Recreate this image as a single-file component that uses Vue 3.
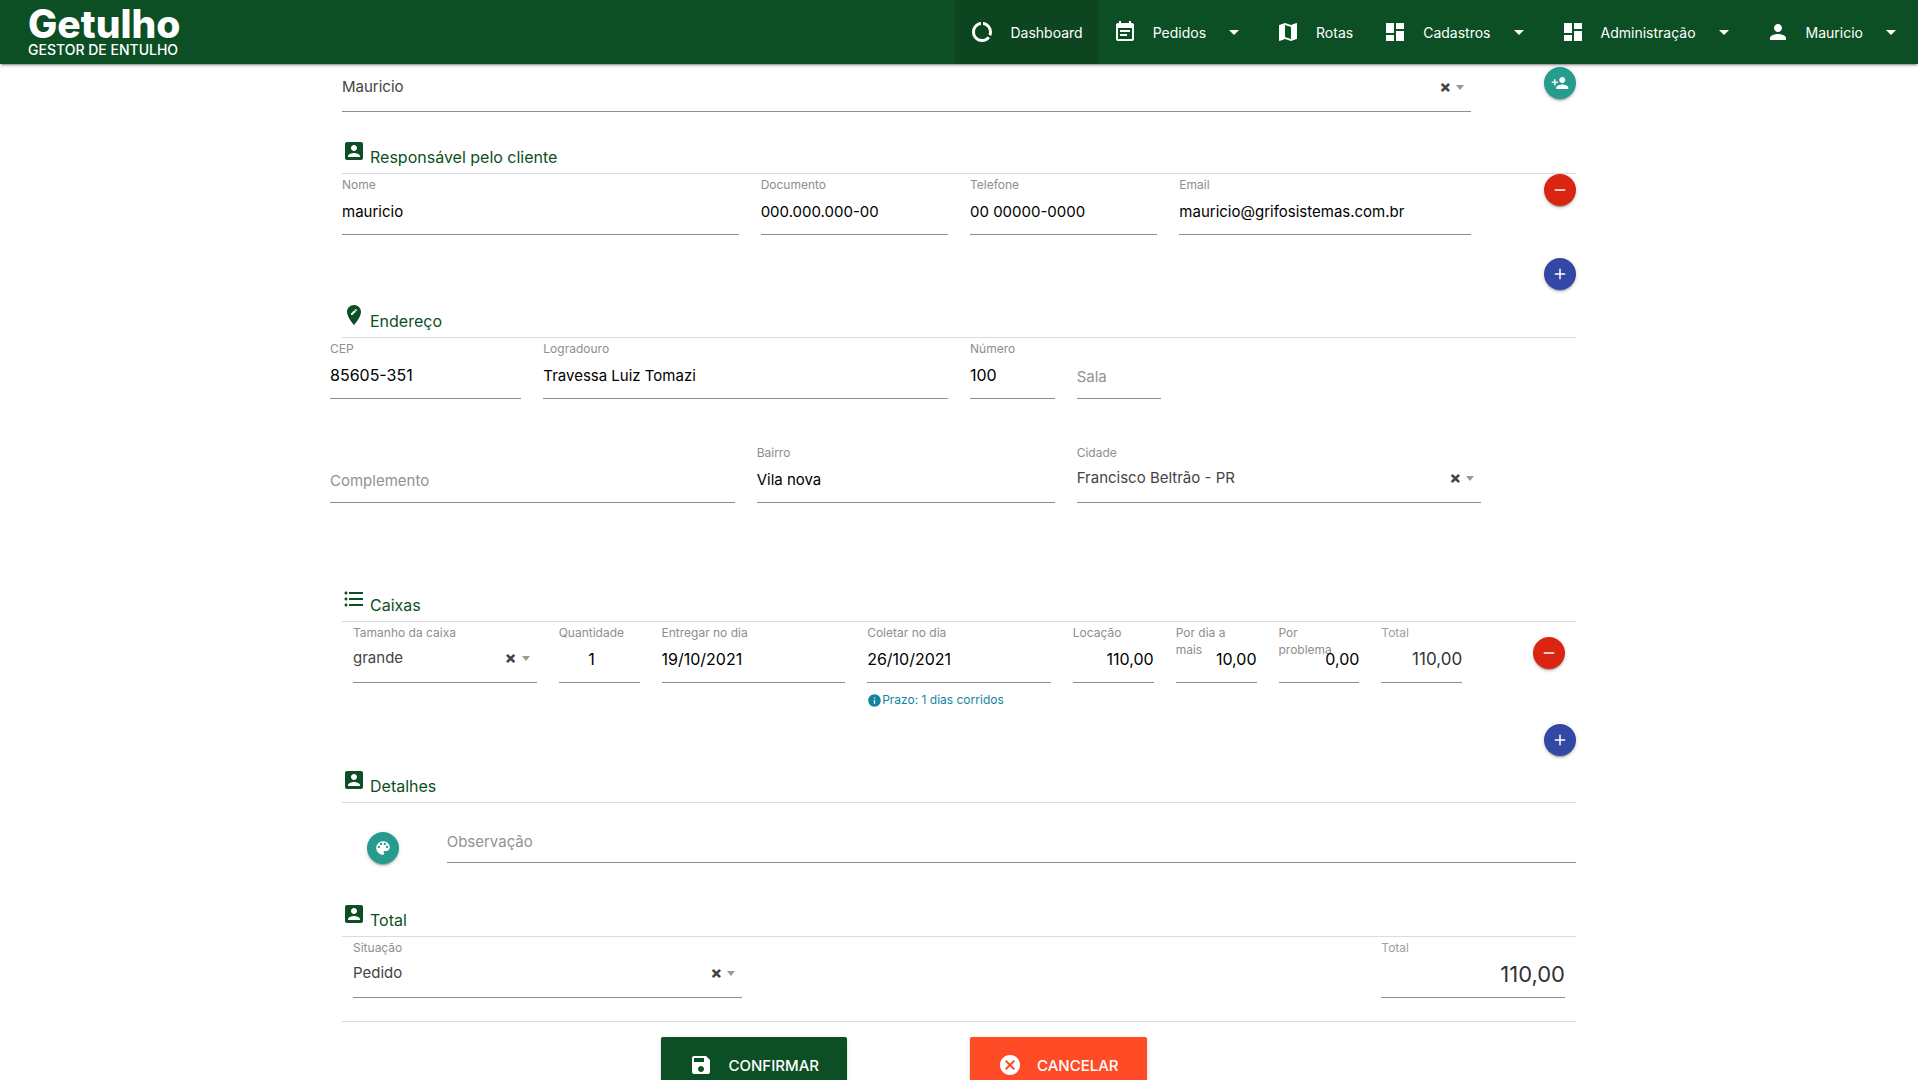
<script setup>
import { reactive, ref } from 'vue'

const icons = {
  usage: 'M13 2.05v3.03c3.39.49 6 3.39 6 6.92 0 .9-.18 1.75-.48 2.54l2.6 1.53c.56-1.24.88-2.62.88-4.07 0-5.18-3.95-9.45-9-9.95zM12 19c-3.87 0-7-3.13-7-7 0-3.53 2.61-6.43 6-6.92V2.05c-5.06.5-9 4.76-9 9.95 0 5.52 4.47 10 9.99 10 3.31 0 6.24-1.61 8.06-4.09l-2.6-1.53C16.17 17.98 14.21 19 12 19z',
  note: 'M17 10H7v2h10v-2zm2-7h-1V1h-2v2H8V1H6v2H5c-1.11 0-1.99.9-1.99 2L3 19c0 1.1.89 2 2 2h14c1.1 0 2-.9 2-2V5c0-1.1-.9-2-2-2zm0 16H5V8h14v11zm-5-5H7v2h7v-2z',
  map: 'M20.5 3l-.16.03L15 5.1 9 3 3.36 4.9c-.21.07-.36.25-.36.48V20.5c0 .28.22.5.5.5l.16-.03L9 18.9l6 2.1 5.64-1.9c.21-.07.36-.25.36-.48V3.5c0-.28-.22-.5-.5-.5zM15 19l-6-2.11V5l6 2.11V19z',
  dashboard: 'M3 13h8V3H3v10zm0 8h8v-6H3v6zm10 0h8V11h-8v10zm0-18v6h8V3h-8z',
  person: 'M12 12c2.21 0 4-1.79 4-4s-1.79-4-4-4-4 1.79-4 4 1.79 4 4 4zm0 2c-2.67 0-8 1.34-8 4v2h16v-2c0-2.66-5.33-4-8-4z',
  caret: 'M7 10l5 5 5-5z',
  personAdd: 'M15 12c2.21 0 4-1.79 4-4s-1.79-4-4-4-4 1.79-4 4 1.79 4 4 4zm-9-2V7H4v3H1v2h3v3h2v-3h3v-2H6zm9 4c-2.67 0-8 1.34-8 4v2h16v-2c0-2.66-5.33-4-8-4z',
  account: 'M3 5v14c0 1.1.89 2 2 2h14c1.1 0 2-.9 2-2V5c0-1.1-.9-2-2-2H5c-1.11 0-2 .9-2 2zm12 4c0 1.66-1.34 3-3 3s-3-1.34-3-3 1.34-3 3-3 3 1.34 3 3zm-9 8c0-2 4-3.1 6-3.1s6 1.1 6 3.1v1H6v-1z',
  place: 'M12 2C8.14 2 5 5.14 5 9c0 5.25 7 13 7 13s7-7.75 7-13c0-3.86-3.14-7-7-7zm-1.56 10H9v-1.44l3.35-3.34 1.43 1.43L10.44 12zm4.45-4.45l-.7.7-1.44-1.44.7-.7c.15-.15.39-.15.54 0l.9.9c.15.15.15.39 0 .54z',
  list: 'M4 10.5c-.83 0-1.5.67-1.5 1.5s.67 1.5 1.5 1.5 1.5-.67 1.5-1.5-.67-1.5-1.5-1.5zm0-6c-.83 0-1.5.67-1.5 1.5S3.17 7.5 4 7.5 5.5 6.83 5.5 6 4.83 4.5 4 4.5zm0 12c-.83 0-1.5.68-1.5 1.5s.68 1.5 1.5 1.5 1.5-.68 1.5-1.5-.67-1.5-1.5-1.5zM7 19h14v-2H7v2zm0-6h14v-2H7v2zm0-8v2h14V5H7z',
  palette: 'M12 3c-4.97 0-9 4.03-9 9s4.03 9 9 9c.83 0 1.5-.67 1.5-1.5 0-.39-.15-.74-.39-1.01-.23-.26-.38-.61-.38-.99 0-.83.67-1.5 1.5-1.5H16c2.76 0 5-2.24 5-5 0-4.42-4.03-8-9-8zm-5.5 9c-.83 0-1.5-.67-1.5-1.5S5.67 9 6.5 9 8 9.67 8 10.5 7.33 12 6.5 12zm3-4C8.67 8 8 7.33 8 6.5S8.67 5 9.5 5s1.5.67 1.5 1.5S10.33 8 9.5 8zm5 0c-.83 0-1.5-.67-1.5-1.5S13.67 5 14.5 5s1.5.67 1.5 1.5S15.33 8 14.5 8zm3 4c-.83 0-1.5-.67-1.5-1.5S16.67 9 17.5 9s1.5.67 1.5 1.5-.67 1.5-1.5 1.5z',
  save: 'M17 3H5c-1.11 0-2 .9-2 2v14c0 1.1.89 2 2 2h14c1.1 0 2-.9 2-2V7l-4-4zm-5 16c-1.66 0-3-1.34-3-3s1.34-3 3-3 3 1.34 3 3-1.34 3-3 3zm3-10H5V5h10v4z',
  cancel: 'M12 2C6.47 2 2 6.47 2 12s4.47 10 10 10 10-4.47 10-10S17.53 2 12 2zm5 13.59L15.59 17 12 13.41 8.41 17 7 15.59 10.59 12 7 8.41 8.41 7 12 10.59 15.59 7 17 8.41 13.41 12 17 15.59z',
  info: 'M12 2C6.48 2 2 6.48 2 12s4.48 10 10 10 10-4.48 10-10S17.52 2 12 2zm1 15h-2v-6h2v6zm0-8h-2V7h2v2z',
  add: 'M19 13h-6v6h-2v-6H5v-2h6V5h2v6h6v2z',
  remove: 'M19 13H5v-2h14v2z',
}

const menu = [
  { text: 'Dashboard', icon: 'usage', active: true },
  { text: 'Pedidos', icon: 'note', drop: true },
  { text: 'Rotas', icon: 'map' },
  { text: 'Cadastros', icon: 'dashboard', drop: true },
  { text: 'Administração', icon: 'dashboard', drop: true },
  { text: 'Mauricio', icon: 'person', drop: true },
]

const cliente = ref('Mauricio')
const responsavel = reactive([
  { id: 'nome', label: 'Nome', value: 'mauricio', span: 's4' },
  { id: 'documento', label: 'Documento', value: '000.000.000-00', span: 's2' },
  { id: 'telefone', label: 'Telefone', value: '00 00000-0000', span: 's2' },
  { id: 'email', label: 'Email', value: 'mauricio@grifosistemas.com.br', span: 's3' },
])
const endereco = reactive([
  { id: 'cep', label: 'CEP', value: '85605-351', span: 's2 digits' },
  { id: 'logradouro', label: 'Logradouro', value: 'Travessa Luiz Tomazi', span: 's4' },
  { id: 'numero', label: 'Número', value: '100', span: 's1 digits' },
])
const sala = ref('')
const complemento = ref('')
const bairro = ref('Vila nova')
const cidade = ref('Francisco Beltrão - PR')
const tamanho = ref('grande')
const quantidade = ref(1)
const entrega = ref('19/10/2021')
const coleta = ref('26/10/2021')
const valores = reactive([
  { id: 'locacao', label: 'Locação', value: '110,00' },
  { id: 'dia-a-mais', label: 'Por dia a mais', value: '10,00' },
  { id: 'problema', label: 'Por problema', value: '0,00' },
])
const observacao = ref('')
const situacao = ref('Pedido')
</script>

<template>
  <div class="app">
    <header class="topbar">
      <a href="#" class="brand">
        <span class="brand-name">Getulho</span>
        <span class="brand-tag">GESTOR DE ENTULHO</span>
      </a>
      <nav class="menu">
        <a v-for="m in menu" :key="m.text" href="#" class="menu-item" :class="{ active: m.active }">
          <svg class="icon" viewBox="0 0 24 24"><path :d="icons[m.icon]" /></svg>
          <span>{{ m.text }}</span>
          <svg v-if="m.drop" class="icon" viewBox="0 0 24 24"><path :d="icons.caret" /></svg>
        </a>
      </nav>
    </header>

    <main class="content">
      <form class="form" @submit.prevent>
        <div class="row inset client">
          <div class="select s11">
            <select v-model="cliente" aria-label="Cliente"><option>Mauricio</option></select>
            <button type="button" class="clear" aria-label="Limpar cliente">×</button>
            <span class="arrow"></span>
          </div>
          <button type="button" class="round teal" aria-label="Adicionar cliente">
            <svg viewBox="0 0 24 24"><path :d="icons.personAdd" /></svg>
          </button>
        </div>

        <h2 class="title after-client">
          <svg class="icon" viewBox="0 0 24 24"><path :d="icons.account" /></svg>
          <span>Responsável pelo cliente</span>
        </h2>
        <div class="row inset">
          <div v-for="f in responsavel" :key="f.id" class="field" :class="f.span">
            <label :for="f.id">{{ f.label }}</label>
            <input :id="f.id" v-model="f.value" type="text">
          </div>
          <button type="button" class="round red" aria-label="Remover responsável">
            <svg viewBox="0 0 24 24"><path :d="icons.remove" /></svg>
          </button>
        </div>
        <div class="add-line">
          <button type="button" class="round blue" aria-label="Adicionar responsável">
            <svg viewBox="0 0 24 24"><path :d="icons.add" /></svg>
          </button>
        </div>

        <h2 class="title">
          <svg class="icon" viewBox="0 0 24 24"><path :d="icons.place" /></svg>
          <span>Endereço</span>
        </h2>
        <div class="row">
          <div v-for="f in endereco" :key="f.id" class="field" :class="f.span">
            <label :for="f.id">{{ f.label }}</label>
            <input :id="f.id" v-model="f.value" type="text">
          </div>
          <div class="field empty s1">
            <input v-model="sala" type="text" placeholder="Sala" aria-label="Sala">
          </div>
        </div>
        <div class="row second">
          <div class="field empty s4">
            <input v-model="complemento" type="text" placeholder="Complemento" aria-label="Complemento">
          </div>
          <div class="field s3">
            <label for="bairro">Bairro</label>
            <input id="bairro" v-model="bairro" type="text">
          </div>
          <div class="field s4">
            <label for="cidade">Cidade</label>
            <div class="select">
              <select id="cidade" v-model="cidade"><option>Francisco Beltrão - PR</option></select>
              <button type="button" class="clear" aria-label="Limpar cidade">×</button>
              <span class="arrow"></span>
            </div>
          </div>
        </div>

        <h2 class="title after-address">
          <svg class="icon" viewBox="0 0 24 24"><path :d="icons.list" /></svg>
          <span>Caixas</span>
        </h2>
        <div class="row deep">
          <div class="field s2">
            <label for="tamanho">Tamanho da caixa</label>
            <div class="select">
              <select id="tamanho" v-model="tamanho"><option>grande</option></select>
              <button type="button" class="clear" aria-label="Limpar tamanho">×</button>
              <span class="arrow"></span>
            </div>
          </div>
          <div class="field s1 centered digits">
            <label for="quantidade">Quantidade</label>
            <input id="quantidade" v-model="quantidade" type="number">
          </div>
          <div class="field s2 digits">
            <label for="entrega">Entregar no dia</label>
            <input id="entrega" v-model="entrega" type="text">
          </div>
          <div class="field s2 digits">
            <label for="coleta">Coletar no dia</label>
            <input id="coleta" v-model="coleta" type="text">
            <p class="hint">
              <svg viewBox="0 0 24 24"><path :d="icons.info" /></svg>
              <span>Prazo: 1 dias corridos</span>
            </p>
          </div>
          <div v-for="f in valores" :key="f.id" class="field s1 money digits">
            <label :for="f.id">{{ f.label }}</label>
            <input :id="f.id" v-model="f.value" type="text">
          </div>
          <div class="field s1 money readonly">
            <label for="total-caixa">Total</label>
            <input id="total-caixa" value="110,00" type="text" readonly>
          </div>
          <button type="button" class="round red lowered" aria-label="Remover caixa">
            <svg viewBox="0 0 24 24"><path :d="icons.remove" /></svg>
          </button>
        </div>
        <div class="add-line near">
          <button type="button" class="round blue" aria-label="Adicionar caixa">
            <svg viewBox="0 0 24 24"><path :d="icons.add" /></svg>
          </button>
        </div>

        <h2 class="title">
          <svg class="icon" viewBox="0 0 24 24"><path :d="icons.account" /></svg>
          <span>Detalhes</span>
        </h2>
        <div class="row inset details">
          <button type="button" class="round teal color" aria-label="Cor">
            <svg viewBox="0 0 24 24"><path :d="icons.palette" /></svg>
          </button>
          <div class="field note s11">
            <input v-model="observacao" type="text" placeholder="Observação" aria-label="Observação">
          </div>
        </div>

        <h2 class="title after-details">
          <svg class="icon" viewBox="0 0 24 24"><path :d="icons.account" /></svg>
          <span>Total</span>
        </h2>
        <div class="row deep">
          <div class="field s4">
            <label for="situacao">Situação</label>
            <div class="select">
              <select id="situacao" v-model="situacao"><option>Pedido</option></select>
              <button type="button" class="clear" aria-label="Limpar situação">×</button>
              <span class="arrow"></span>
            </div>
          </div>
          <div class="field grand money readonly">
            <label for="total-geral">Total</label>
            <input id="total-geral" value="110,00" type="text" readonly>
          </div>
        </div>

        <hr class="rule">
        <div class="actions">
          <div class="half confirm-side">
            <button type="submit" class="btn confirm">
              <svg class="icon" viewBox="0 0 24 24"><path :d="icons.save" /></svg>
              <span>CONFIRMAR</span>
            </button>
          </div>
          <div class="half">
            <button type="button" class="btn cancel">
              <svg class="icon" viewBox="0 0 24 24"><path :d="icons.cancel" /></svg>
              <span>CANCELAR</span>
            </button>
          </div>
        </div>
      </form>
    </main>
  </div>
</template>

<style>
body {
  background: #fff;
}
</style>

<style scoped>
.app {
  display: flex;
  flex-direction: column;
  height: 100vh;
  overflow: hidden;
  font-family: Inter, "Liberation Sans", sans-serif;
  font-size: 15px;
}
.app *,
.app *::before {
  box-sizing: border-box;
}
svg {
  display: block;
  flex: none;
  fill: currentColor;
}
.icon {
  width: 24px;
  height: 24px;
}
button,
input,
select {
  font-family: inherit;
  margin: 0;
  border: 0;
  border-radius: 0;
  outline: none;
}
button {
  cursor: pointer;
}

.topbar {
  position: relative;
  z-index: 2;
  flex: none;
  display: flex;
  justify-content: space-between;
  height: 64px;
  background: #0d4f24;
  color: #fff;
  box-shadow: 0 2px 2px rgba(0, 0, 0, 0.14), 0 1px 5px rgba(0, 0, 0, 0.12), 0 3px 1px -2px rgba(0, 0, 0, 0.2);
}
.brand {
  display: flex;
  flex-direction: column;
  padding: 5px 0 0 28px;
  color: #fff;
  text-decoration: none;
}
.brand-name {
  font-size: 39px;
  line-height: 38px;
  font-weight: 800;
}
.brand-tag {
  font-size: 14px;
  line-height: 13px;
  font-weight: 500;
}
.menu {
  display: flex;
}
.menu-item {
  display: flex;
  align-items: center;
  gap: 16px;
  padding: 0 15px;
  color: #fff;
  font-size: 14px;
  text-decoration: none;
}
.menu-item.active {
  background: #0c4520;
}

.content {
  flex: 1;
  min-height: 0;
  overflow-y: auto;
  scrollbar-width: none;
}
.form {
  width: 90%;
  max-width: 1280px;
  margin: 0 auto;
  padding-top: 3px;
}
.row {
  display: grid;
  grid-template-columns: repeat(12, minmax(0, 1fr));
  column-gap: 22px;
  align-items: start;
  padding: 0 11px;
}
.inset {
  padding: 0 23px;
}
.deep {
  padding: 0 34px;
}
.s1 { grid-column: span 1; }
.s2 { grid-column: span 2; }
.s3 { grid-column: span 3; }
.s4 { grid-column: span 4; }
.s11 { grid-column: span 11; }
.client .select {
  margin-top: 3px;
}
.second {
  margin-top: 43px;
}

.title {
  display: flex;
  align-items: baseline;
  gap: 4px;
  margin: 12px 23px 0;
  height: 35px;
  border-bottom: 1px solid #dcdcdc;
  color: #0d4f24;
  font-size: 16px;
  line-height: 24px;
  font-weight: 400;
}
.after-client { margin-top: 27px; }
.after-address { margin-top: 84px; }
.after-details { margin-top: 38px; }

.field label {
  display: block;
  height: 19px;
  padding: 2px 8px 0 0;
  color: #8e8e8e;
  font-size: 12px;
  line-height: 17px;
}
.field.empty {
  align-self: end;
}
.field input {
  display: block;
  width: 100%;
  height: 42px;
  padding: 0 0 5px;
  border-bottom: 1px solid #8e8e8e;
  background: none;
  color: #000;
  font-size: 15px;
}
.field.digits input {
  font-size: 16px;
}
.field.empty input {
  padding-bottom: 3px;
}
.field.note input {
  padding-bottom: 1px;
}
.field input::placeholder {
  color: #929292;
  font-size: 15px;
  opacity: 1;
}
.select {
  position: relative;
}
.select select {
  display: block;
  appearance: none;
  width: 100%;
  height: 42px;
  padding: 0 40px 8px 0;
  border-bottom: 1px solid #8e8e8e;
  background: none;
  color: #444;
  font-size: 15px;
}
.clear {
  position: absolute;
  top: 6px;
  right: 20px;
  width: 12px;
  height: 20px;
  padding: 0;
  background: none;
  color: #444;
  font-size: 17px;
  line-height: 20px;
  font-weight: 800;
}
.arrow {
  position: absolute;
  top: 15px;
  right: 7px;
  border: solid transparent;
  border-width: 5px 4px 0;
  border-top-color: #999;
}
.money input {
  text-align: right;
}
.centered input {
  text-align: center;
}
.field.readonly input {
  color: #333;
  font-size: 17px;
}
.field.readonly label {
  color: #a0a0a0;
}
.grand {
  grid-column: 11 / span 2;
}
.field.grand input {
  font-size: 22px;
}
.hint {
  display: flex;
  align-items: center;
  margin: 8px 0 0;
  color: #14849f;
  font-size: 12px;
  line-height: 18px;
  white-space: nowrap;
}
.hint svg {
  width: 15px;
  height: 15px;
}

.round {
  display: flex;
  align-items: center;
  justify-content: center;
  justify-self: end;
  width: 32px;
  height: 32px;
  padding: 0;
  border-radius: 50%;
  color: #fff;
  box-shadow: 0 2px 2px rgba(0, 0, 0, 0.14), 0 1px 5px rgba(0, 0, 0, 0.12), 0 3px 1px -2px rgba(0, 0, 0, 0.2);
}
.round svg {
  width: 18px;
  height: 18px;
}
.teal { background: #269c8f; }
.red { background: #d92512; }
.blue { background: #3347a4; }
.lowered { margin-top: 15px; }
.color {
  margin-top: 11px;
  justify-self: center;
}
.add-line {
  display: flex;
  justify-content: flex-end;
  padding: 23px 23px 1px;
}
.near {
  padding: 15px 23px 0;
}
.details {
  padding-top: 18px;
}

.rule {
  height: 1px;
  margin: 23px 23px 15px;
  border: 0;
  background: #dcdcdc;
}
.actions {
  display: grid;
  grid-template-columns: 1fr 1fr;
}
.half {
  display: flex;
  padding: 0 11px;
}
.confirm-side {
  justify-content: flex-end;
  padding-right: 112px;
}
.btn {
  display: flex;
  align-items: center;
  gap: 15px;
  height: 56px;
  padding: 0 28px;
  border-radius: 2px;
  color: #fff;
  font-size: 15px;
  font-weight: 500;
  white-space: nowrap;
  box-shadow: 0 2px 2px rgba(0, 0, 0, 0.14), 0 1px 5px rgba(0, 0, 0, 0.12), 0 3px 1px -2px rgba(0, 0, 0, 0.2);
}
.confirm {
  background: #0d4f24;
}
.cancel {
  background: #ff4c27;
}
</style>
